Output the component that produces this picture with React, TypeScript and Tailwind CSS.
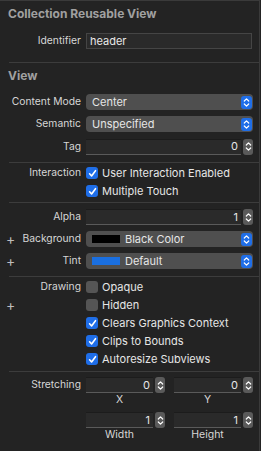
import React from "react";

const font = { fontFamily: "Inter, 'Liberation Sans', sans-serif" };

function Chevrons() {
  return (
    <svg width="7" height="11" viewBox="0 0 7 11">
      <path d="M1.3 4 L3.5 1.8 L5.7 4" fill="none" stroke="white" strokeWidth="1.2" strokeLinecap="round" strokeLinejoin="round" />
      <path d="M1.3 7 L3.5 9.2 L5.7 7" fill="none" stroke="white" strokeWidth="1.2" strokeLinecap="round" strokeLinejoin="round" />
    </svg>
  );
}

function Popup({ value, swatch }: { value: string; swatch?: string }) {
  return (
    <div className="flex h-[16px] w-[167px] items-center rounded-[4px] bg-[#4f4f4f] pl-[6px] pr-[1px]">
      {swatch && <div className="mr-[5px] h-[8px] w-[28px]" style={{ background: swatch }} />}
      <span className="flex-1 whitespace-nowrap text-[11px] leading-none text-[#e6e6e6]">{value}</span>
      <div className="flex h-[13px] w-[11px] items-center justify-center rounded-[3px] bg-[#1f6ee8]">
        <Chevrons />
      </div>
    </div>
  );
}

function Stepper() {
  return (
    <div className="flex h-[16px] w-[10px] items-center justify-center rounded-[3px] bg-[#5a5a5a]">
      <Chevrons />
    </div>
  );
}

function NumField({ value, w }: { value: string; w: string }) {
  return (
    <div className="flex items-center gap-[2px]">
      <div className={`flex h-[16px] ${w} items-center justify-end border-b border-t border-b-[#5a5a5a] border-t-[#1c1c1c] bg-[#2a2a2a] pr-[3px] text-[11px] text-[#e6e6e6]`}>
        {value}
      </div>
      <Stepper />
    </div>
  );
}

function Check({ on }: { on: boolean }) {
  return on ? (
    <div className="flex h-[12px] w-[12px] items-center justify-center rounded-[3px] bg-[#1f6ee8]">
      <svg width="9" height="9" viewBox="0 0 9 9">
        <path d="M1.6 4.8 L3.6 7 L7.5 1.7" fill="none" stroke="white" strokeWidth="1.6" strokeLinecap="round" strokeLinejoin="round" />
      </svg>
    </div>
  ) : (
    <div className="h-[12px] w-[12px] rounded-[3px] bg-[#555555]" />
  );
}

function Row({ label, plus, children, h }: { label?: string; plus?: boolean; children?: React.ReactNode; h: string }) {
  return (
    <div className={`flex ${h} items-center`}>
      <div className="flex w-[22px] shrink-0 items-center pl-[6px] text-[14px] leading-none text-[#bdbdbd]">
        {plus ? "+" : ""}
      </div>
      <div className="flex w-[59px] shrink-0 justify-end whitespace-nowrap text-[10.3px] text-[#d6d6d6]">
        <span>{label}</span>
      </div>
      <div className="ml-[5px] flex items-center">{children}</div>
    </div>
  );
}

function CheckRow({ label, on, title, plus }: { label: string; on: boolean; title?: string; plus?: boolean }) {
  return (
    <Row label={title} plus={plus} h="h-[18px]">
      <Check on={on} />
      <span className="ml-[4px] whitespace-nowrap text-[11px] text-[#e6e6e6]">{label}</span>
    </Row>
  );
}

function Sep() {
  return <div className="ml-[9px] h-px bg-[#3c3c3c]" />;
}

export default function App() {
  return (
    <div className="h-[451px] w-[261px] bg-[#232323]" style={font}>
      <div className="h-[451px] w-[260px] overflow-hidden border-r border-t border-[#3a3a3a] bg-[#232323]">
        <div className="flex h-[25px] items-center whitespace-nowrap px-[8px] text-[12px] font-bold text-[#a0a0a0]">Collection Reusable View</div>
        <div className="flex h-[30px] items-center">
          <div className="w-[81px] text-right text-[10.3px] text-[#d6d6d6]">Identifier</div>
          <div className="ml-[5px] flex h-[16px] w-[166px] items-center border border-[#454545] bg-[#2a2a2a] pl-[3px] text-[11px] text-[#e8e8e8]">header</div>
        </div>
        <div className="h-[6px]" />
        <Sep />
        <div className="flex h-[26px] items-center px-[8px] text-[12px] font-bold text-[#a0a0a0]">View</div>
        <div className="h-[2px]" />
        <Row label="Content Mode" h="h-[22px]"><Popup value="Center" /></Row>
        <Row label="Semantic" h="h-[22px]"><Popup value="Unspecified" /></Row>
        <Row label="Tag" h="h-[23px]"><NumField value="0" w="w-[155px]" /></Row>
        <div className="h-[4px]" />
        <Sep />
        <div className="h-[1px]" />
        <CheckRow title="Interaction" label="User Interaction Enabled" on />
        <CheckRow label="Multiple Touch" on />
        <div className="h-[2px]" />
        <Sep />
        <div className="h-[3px]" />
        <Row label="Alpha" h="h-[22px]"><NumField value="1" w="w-[155px]" /></Row>
        <Row label="Background" plus h="h-[22px]"><Popup value="Black Color" swatch="#000000" /></Row>
        <Row label="Tint" plus h="h-[22px]"><Popup value="Default" swatch="#1a6fe0" /></Row>
        <div className="h-[4px]" />
        <Sep />
        <div className="h-[1px]" />
        <CheckRow title="Drawing" label="Opaque" on={false} />
        <CheckRow label="Hidden" on={false} plus />
        <CheckRow label="Clears Graphics Context" on />
        <CheckRow label="Clips to Bounds" on />
        <CheckRow label="Autoresize Subviews" on />
        <div className="h-[3px]" />
        <Sep />
        <div className="h-[4px]" />
        <Row label="Stretching" h="h-[18px]">
          <div className="flex gap-[9px]">
            <NumField value="0" w="w-[67px]" />
            <NumField value="0" w="w-[67px]" />
          </div>
        </Row>
        <div className="flex h-[12px] items-center text-[10.5px] text-[#d6d6d6]">
          <div className="ml-[86px] w-[67px] text-center">X</div>
          <div className="ml-[21px] w-[67px] text-center">Y</div>
        </div>
        <div className="h-[5px]" />
        <Row h="h-[18px]">
          <div className="flex gap-[9px]">
            <NumField value="1" w="w-[67px]" />
            <NumField value="1" w="w-[67px]" />
          </div>
        </Row>
        <div className="flex h-[12px] items-center text-[10.5px] text-[#d6d6d6]">
          <div className="ml-[86px] w-[67px] text-center">Width</div>
          <div className="ml-[21px] w-[67px] text-center">Height</div>
        </div>
      </div>
    </div>
  );
}
